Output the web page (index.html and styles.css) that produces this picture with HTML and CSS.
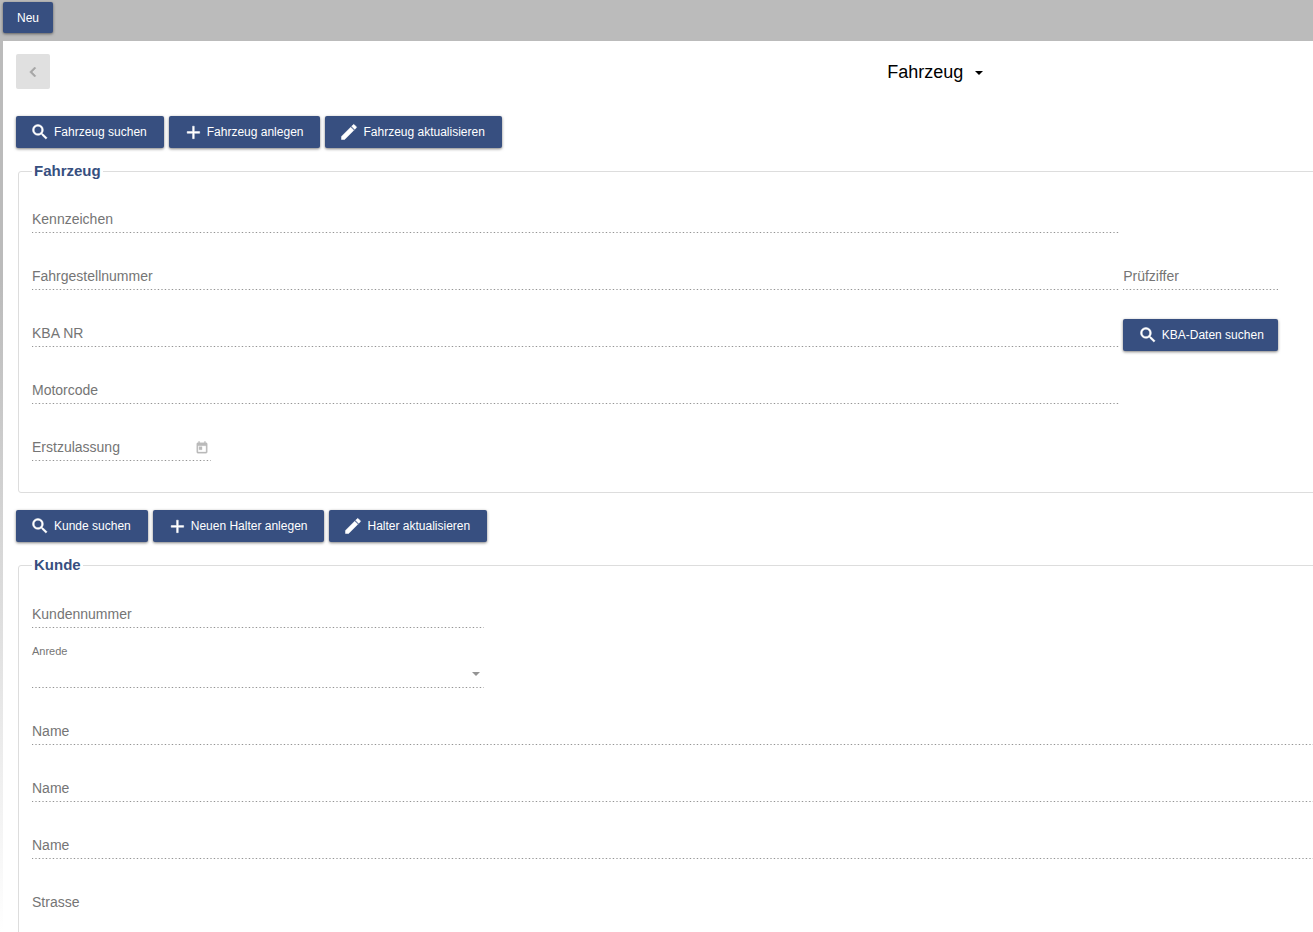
FILE: index.html
```html
<!DOCTYPE html>
<html lang="de">
<head>
<meta charset="utf-8">
<title>Fahrzeug</title>
<link rel="stylesheet" href="styles.css">
</head>
<body>
<svg class="sprite" aria-hidden="true">
  <symbol id="search" viewBox="0 0 24 24"><path d="M15.5 14h-.79l-.28-.27A6.47 6.47 0 0 0 16 9.5 6.5 6.5 0 1 0 9.5 16c1.61 0 3.09-.59 4.23-1.57l.27.28v.79l5 4.99L20.49 19l-4.99-5zm-6 0C7.01 14 5 11.99 5 9.5S7.01 5 9.500 5 14 7.010 14 9.500 11.990 14 9.500 14z"/></symbol>
  <symbol id="plus" viewBox="0 0 24 24"><path d="M20 13.500h-6.500v6.500h-2v-6.500H5v-2h6.500V5h2v6.500h6.500v2z"/></symbol>
  <symbol id="pencil" viewBox="0 0 24 24"><path d="M3 17.250V21h3.750L17.810 9.940l-3.750-3.750L3 17.250zM20.710 7.040a1 1 0 0 0 0-1.410l-2.340-2.340a1 1 0 0 0-1.410 0l-1.830 1.830 3.750 3.750 1.830-1.830z"/></symbol>
  <symbol id="back" viewBox="0 0 24 24"><path d="M15.410 7.410L14 6l-6 6 6 6 1.410-1.410L10.830 12z"/></symbol>
  <symbol id="calendar" viewBox="0 0 24 24"><path d="M19 3h-1V1h-2v2H8V1H6v2H5c-1.110 0-1.990.9-1.990 2L3 19a2 2 0 0 0 2 2h14c1.100 0 2-.9 2-2V5c0-1.100-.9-2-2-2zm0 16H5V8h14v11zM7 10h5v5H7z"/></symbol>
</svg>
<header class="topbar"><button class="btn" type="button">Neu</button></header>
<main class="page">
  <div class="toolbar">
    <button class="back" type="button" aria-label="Zurück" disabled><svg class="icon"><use href="#back"/></svg></button>
    <button class="title" type="button">Fahrzeug <span class="caret"></span></button>
  </div>
  <div class="actions">
    <button class="btn with-icon" type="button"><svg class="icon"><use href="#search"/></svg>Fahrzeug suchen</button>
    <button class="btn with-icon" type="button"><svg class="icon"><use href="#plus"/></svg>Fahrzeug anlegen</button>
    <button class="btn with-icon" type="button"><svg class="icon"><use href="#pencil"/></svg>Fahrzeug aktualisieren</button>
  </div>
  <fieldset class="group">
    <legend>Fahrzeug</legend>
    <div class="rows vehicle">
      <div class="field main-col"><label for="plate">Kennzeichen</label><input id="plate" disabled></div>
      <div class="field main-col"><label for="vin">Fahrgestellnummer</label><input id="vin" disabled></div>
      <div class="field"><label for="check">Prüfziffer</label><input id="check" disabled></div>
      <div class="field main-col"><label for="kba">KBA NR</label><input id="kba" disabled></div>
      <button class="btn with-icon kba" type="button"><svg class="icon"><use href="#search"/></svg>KBA-Daten suchen</button>
      <div class="field main-col"><label for="engine">Motorcode</label><input id="engine" disabled></div>
      <div class="field main-col date"><label for="first">Erstzulassung</label><input id="first" disabled><button class="pick" type="button" aria-label="Kalender öffnen" disabled><svg class="icon"><use href="#calendar"/></svg></button></div>
    </div>
  </fieldset>
  <div class="actions second">
    <button class="btn with-icon" type="button"><svg class="icon"><use href="#search"/></svg>Kunde suchen</button>
    <button class="btn with-icon" type="button"><svg class="icon"><use href="#plus"/></svg>Neuen Halter anlegen</button>
    <button class="btn with-icon" type="button"><svg class="icon"><use href="#pencil"/></svg>Halter aktualisieren</button>
  </div>
  <fieldset class="group customer">
    <legend>Kunde</legend>
    <div class="rows">
      <div class="field quarter"><label for="number">Kundennummer</label><input id="number" disabled></div>
      <div class="field quarter choice"><label for="salutation">Anrede</label><select id="salutation" disabled><option></option></select><span class="caret"></span></div>
      <div class="field"><label for="name1">Name</label><input id="name1" disabled></div>
      <div class="field"><label for="name2">Name</label><input id="name2" disabled></div>
      <div class="field"><label for="name3">Name</label><input id="name3" disabled></div>
      <div class="field plain"><label for="street">Strasse</label><input id="street" disabled></div>
    </div>
  </fieldset>
</main>
</body>
</html>
```
FILE: styles.css
```css
* { box-sizing: border-box; }

html { height: 100%; }

body {
  display: flex;
  flex-direction: column;
  height: 100%;
  margin: 0;
  overflow: hidden;
  background: linear-gradient(#bbb 30%, #fff 100%);
  font-family: "Liberation Sans", Arial, sans-serif;
  font-size: 14px;
}

button, input, select { font-family: inherit; }

.sprite { display: none; }

.icon {
  width: 20px;
  height: 20px;
  fill: currentColor;
  stroke: currentColor;
  stroke-width: .6;
}

.topbar {
  flex: none;
  height: 41px;
  padding: 2px 3px;
}

.btn {
  height: 32px;
  padding: 0 14px;
  border: 0;
  border-radius: 2px;
  background: #374f80;
  color: #fff;
  font-size: 12px;
  white-space: nowrap;
  box-shadow: 0 1px 3px rgba(0, 0, 0, .5);
}

.topbar .btn { height: 31px; }

.with-icon {
  display: flex;
  align-items: center;
  gap: 4px;
  padding-right: 17px;
}

/* The form is wider than the window and runs off its right edge. */
.page {
  flex: 1 0 auto;
  width: 142vw;
  margin-left: 3px;
  padding: 13px;
  background: #fff;
}

.toolbar {
  display: grid;
  grid-template-columns: 1fr auto 1fr;
  align-items: center;
}

.back {
  display: flex;
  align-items: center;
  justify-content: center;
  width: 34px;
  height: 35px;
  padding: 0;
  border: 0;
  border-radius: 2px;
  background: #e0e0e0;
  color: #a6a6a6;
}

.title {
  display: flex;
  align-items: center;
  gap: 12px;
  padding: 2px 0 0;
  border: 0;
  background: none;
  color: #000;
  font-size: 18px;
}

.caret {
  border: 4px solid transparent;
  border-top-color: currentColor;
  border-bottom: 0;
}

.actions {
  display: flex;
  gap: 5px;
  margin: 27px 0 14px;
}

.second { margin-top: 17px; }

.group {
  margin: 0 2px;
  padding: 13px 13px 31px;
  border: 1px solid #ddd;
  border-radius: 3px;
}

.customer { padding-top: 14px; }

.group legend {
  padding: 0 2px;
  color: #374f80;
  font-size: 15px;
  font-weight: bold;
  line-height: 18px;
}

.rows {
  display: grid;
  row-gap: 17px;
}

.vehicle {
  grid-template-columns: 7fr 1fr;
  column-gap: 4px;
  width: 69%;
}

.main-col { grid-column: 1; }

.field {
  display: grid;
  height: 40px;
  color: #757575;
  background: repeating-linear-gradient(to right, #949494 0 1px, #eee 1px 2px, #fff 2px 3px, #bbb 3px 5px, #fff 5px 6px, #e4e4e4 6px 7px) bottom / 100% 1px no-repeat;
}

.field > * { grid-area: 1 / 1; }

.field label {
  align-self: end;
  padding-bottom: 4px;
  line-height: 20px;
}

.field input, .field select {
  width: 100%;
  min-width: 0;
  padding: 0;
  border: 0;
  background: transparent;
  appearance: none;
}

.kba {
  align-self: end;
  justify-content: center;
  margin-bottom: -4px;
  padding: 0 14px;
}

.date { width: 179px; }

.pick {
  display: flex;
  align-self: end;
  justify-self: end;
  padding: 0 2px 6px 0;
  border: 0;
  background: none;
  color: #bababa;
}

.pick .icon { width: 14px; height: 14px; }

.quarter { width: 25%; }

.choice { height: 43px; }

.choice label {
  align-self: start;
  padding: 0;
  font-size: 11px;
  line-height: 12px;
}

.choice .caret {
  align-self: end;
  justify-self: end;
  margin: 0 4px 12px 0;
  color: #949494;
}

.plain { background: none; }
```
